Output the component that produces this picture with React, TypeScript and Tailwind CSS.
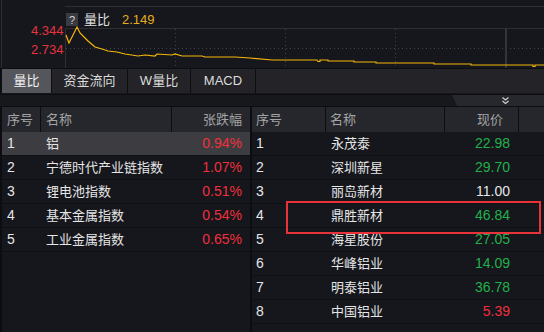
import React from "react";

const FONT = { fontFamily: '"Liberation Sans", "Noto Sans CJK SC", sans-serif' };

const linePts: [number, number][] = [
  [66, 35], [69, 43], [77, 27], [80, 33], [85, 38], [88, 41], [95, 47], [102, 49],
  [108, 51], [117, 52], [125, 54], [138, 56], [145, 55], [155, 56], [157, 54],
  [172, 55], [175, 54], [182, 56], [202, 56], [205, 57], [235, 57], [250, 58],
  [272, 60], [317, 60], [318, 61.5], [320, 61.5], [320, 60], [328, 60], [328, 61],
  [354, 61], [354, 62], [376, 62], [376, 63], [434, 63], [434, 64], [471, 64],
  [471, 65], [533, 65], [533, 66.5], [535, 66.5], [535, 65], [544, 65],
];

function Chart() {
  return (
    <div className="relative h-[68px] w-full">
      <svg width={544} height={68} className="absolute left-0 top-0">
        <line x1={1.5} y1={0} x2={1.5} y2={68} stroke="#2b2c31" />
        <line x1={65} y1={6.5} x2={544} y2={6.5} stroke="#2e2f34" />
        <line x1={65} y1={28.5} x2={544} y2={28.5} stroke="#2e2f34" />
        <line x1={65.5} y1={28} x2={65.5} y2={68} stroke="#2e2f34" />
        {[175.5, 285.5, 395.5].map((x) => (
          <line key={x} x1={x} y1={29} x2={x} y2={68} stroke="#43444a" strokeDasharray="1 3" />
        ))}
        <line x1={66} y1={48.5} x2={544} y2={48.5} stroke="#43444a" strokeDasharray="1 3" />
        <line x1={506} y1={28} x2={506} y2={68} stroke="#34353a" strokeWidth={2} />
        <polyline
          points={linePts.map((p) => p.join(",")).join(" ")}
          fill="none"
          stroke="#f5b50a"
          strokeWidth={1.2}
        />
      </svg>
      <div className="absolute left-[66px] top-[10px] flex items-center text-[13px]" style={FONT}>
        <span className="flex h-[13px] w-[12px] items-center justify-center bg-[#3a3b40] text-[11px] text-[#d8d8d8]">?</span>
        <span className="ml-[6px] text-[#e0e0e0]">量比</span>
        <span className="ml-[12px] text-[#e8ac1c]">2.149</span>
      </div>
      <div className="absolute left-[31px] top-[21px] text-[13px] text-[#e8323c]" style={FONT}>4.344</div>
      <div className="absolute left-[31px] top-[40px] text-[13px] text-[#e8323c]" style={FONT}>2.734</div>
    </div>
  );
}

function Tabs() {
  const tabs = [
    { t: "量比", w: "w-[49px]", active: true },
    { t: "资金流向", w: "w-[75px]" },
    { t: "W量比", w: "w-[62px]" },
    { t: "MACD", w: "w-[64px]" },
  ];
  return (
    <div className="flex h-[25px] border-t border-[#0c0d10] bg-[#0c0d10] pl-[2px]" style={FONT}>
      {tabs.map((tb) => (
        <div
          key={tb.t}
          className={`${tb.w} mr-px flex items-center justify-center text-[13px] ${
            tb.active ? "bg-[#55565c] text-[#f2f2f2]" : "bg-[#232328] text-[#dcdcdc]"
          }`}
        >
          {tb.t}
        </div>
      ))}
      <div className="flex-1 bg-[#232328]" />
    </div>
  );
}

function Bar() {
  return (
    <div className="mt-[1px] border-t border-[#0c0d10]">
      <div className="relative h-[11px] bg-[#17181c]">
        <div
          className="absolute right-0 top-0 h-full w-[92px] bg-[#27282d]"
          style={{ clipPath: "polygon(0 0, 100% 0, 100% 100%, 5px 100%)" }}
        />
        <svg width={9} height={9} className="absolute left-[501px] top-[1px]" viewBox="0 0 9 9">
          <polyline points="1.5,1.5 4.5,4 7.5,1.5" fill="none" stroke="#cfcfcf" strokeWidth={1.3} />
          <polyline points="1.5,5 4.5,7.5 7.5,5" fill="none" stroke="#cfcfcf" strokeWidth={1.3} />
        </svg>
      </div>
    </div>
  );
}

const leftRows = [
  ["1", "铝", "0.94%"],
  ["2", "宁德时代产业链指数", "1.07%"],
  ["3", "锂电池指数", "0.51%"],
  ["4", "基本金属指数", "0.54%"],
  ["5", "工业金属指数", "0.65%"],
];

const rightRows: [string, string, string, string][] = [
  ["1", "永茂泰", "22.98", "g"],
  ["2", "深圳新星", "29.70", "g"],
  ["3", "丽岛新材", "11.00", "w"],
  ["4", "鼎胜新材", "46.84", "g"],
  ["5", "海星股份", "27.05", "g"],
  ["6", "华峰铝业", "14.09", "g"],
  ["7", "明泰铝业", "36.78", "g"],
  ["8", "中国铝业", "5.39", "r"],
];

function LeftTable() {
  return (
    <div className="flex w-[248px] flex-col bg-[#15171c]" style={FONT}>
      <div className="flex h-[25px] bg-[#26272c] text-[13px] text-[#a3a3a3]">
        <div className="flex w-[38px] items-center pl-[5px]">序号</div>
        <div className="flex w-[131px] items-center border-l border-[#0c0d10] pl-[5px]">名称</div>
        <div className="flex flex-1 items-center justify-end border-l border-[#0c0d10] pr-[8px]">张跌幅</div>
      </div>
      {leftRows.map((r, i) => (
        <div
          key={r[0]}
          className={`flex h-[24px] items-center border-b border-[#0f1014] ${i === 0 ? "bg-[#3d3d41]" : ""}`}
        >
          <div className="w-[38px] pl-[5px] text-[14px] text-[#e6e6e6]">{r[0]}</div>
          <div className="w-[131px] pl-[6px] text-[13px] text-[#e6e6e6]">{r[1]}</div>
          <div className="flex-1 pr-[8px] text-right text-[14px] text-[#f0303c]">{r[2]}</div>
        </div>
      ))}
      <div className="flex-1" />
    </div>
  );
}

function RightTable() {
  const color = (c: string) =>
    c === "g" ? "text-[#22b04b]" : c === "r" ? "text-[#f0303c]" : "text-[#e6e6e6]";
  return (
    <div className="relative flex flex-1 flex-col bg-[#15171c]" style={FONT}>
      <div className="flex h-[25px] bg-[#26272c] text-[13px] text-[#a3a3a3]">
        <div className="flex w-[73px] items-center pl-[4px]">序号</div>
        <div className="flex w-[119px] items-center border-l border-[#0c0d10] pl-[4px]">名称</div>
        <div className="flex w-[74px] items-center justify-end border-l border-[#0c0d10] pr-[15px]">现价</div>
        <div className="flex-1 border-l border-[#0c0d10]" />
      </div>
      {rightRows.map((r) => (
        <div key={r[0]} className="flex h-[24px] items-center border-b border-[#0f1014]">
          <div className="w-[73px] pl-[4px] text-[14px] text-[#e6e6e6]">{r[0]}</div>
          <div className="w-[119px] pl-[6px] text-[13px] text-[#e6e6e6]">{r[1]}</div>
          <div className={`w-[74px] pr-[8px] text-right text-[14px] ${color(r[3])}`}>{r[2]}</div>
          <div className="flex-1" />
        </div>
      ))}
      <div className="flex-1" />
      <div className="pointer-events-none absolute left-[34px] top-[94px] h-[33px] w-[255px] border-2 border-[#e8333a]" />
    </div>
  );
}

export default function App() {
  return (
    <div className="flex h-[332px] w-[544px] flex-col overflow-hidden bg-[#15171c]">
      <Chart />
      <Tabs />
      <Bar />
      <div className="flex flex-1 gap-[2px] border-t border-[#0c0d10] bg-[#0c0d10] pl-[2px]">
        <LeftTable />
        <RightTable />
      </div>
    </div>
  );
}
